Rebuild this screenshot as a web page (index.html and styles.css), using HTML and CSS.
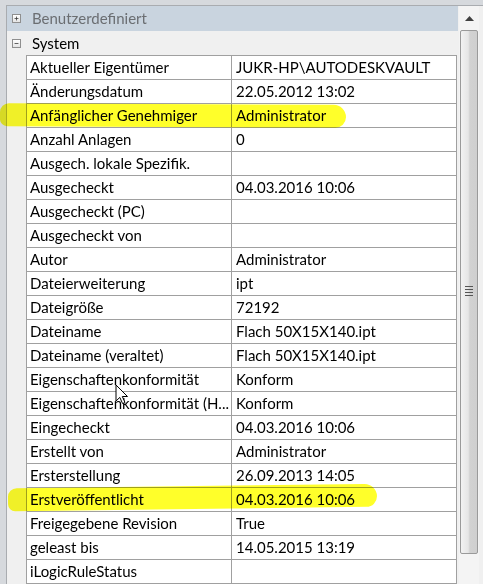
FILE: index.html
```html
<!DOCTYPE html>
<html>
<head>
<meta charset="utf-8">
<link rel="stylesheet" href="styles.css">
</head>
<body>
<div class="frame">
  <div class="panel">
    <div class="content">
      <div class="cat cat-collapsed">
        <span class="exp"><svg width="9" height="9" viewBox="0 0 9 9"><path d="M2 4.5h5M4.5 2v5" stroke="#3a3a3a" stroke-width="1"/></svg></span>
        <span class="cat-label muted">Benutzerdefiniert</span>
      </div>
      <div class="cat">
        <span class="exp"><svg width="9" height="9" viewBox="0 0 9 9"><path d="M2 4.5h5" stroke="#3a3a3a" stroke-width="1"/></svg></span>
        <span class="cat-label">System</span>
      </div>
      <div class="grid">
        <div class="row"><div class="name">Aktueller Eigentümer</div><div class="val">JUKR-HP\AUTODESKVAULT</div></div>
        <div class="row"><div class="name">Änderungsdatum</div><div class="val">22.05.2012 13:02</div></div>
        <div class="row"><div class="name">Anfänglicher Genehmiger</div><div class="val">Administrator</div></div>
        <div class="row"><div class="name">Anzahl Anlagen</div><div class="val">0</div></div>
        <div class="row"><div class="name">Ausgech. lokale Spezifik.</div><div class="val"></div></div>
        <div class="row"><div class="name">Ausgecheckt</div><div class="val">04.03.2016 10:06</div></div>
        <div class="row"><div class="name">Ausgecheckt (PC)</div><div class="val"></div></div>
        <div class="row"><div class="name">Ausgecheckt von</div><div class="val"></div></div>
        <div class="row"><div class="name">Autor</div><div class="val">Administrator</div></div>
        <div class="row"><div class="name">Dateierweiterung</div><div class="val">ipt</div></div>
        <div class="row"><div class="name">Dateigröße</div><div class="val">72192</div></div>
        <div class="row"><div class="name">Dateiname</div><div class="val">Flach 50X15X140.ipt</div></div>
        <div class="row"><div class="name">Dateiname (veraltet)</div><div class="val">Flach 50X15X140.ipt</div></div>
        <div class="row"><div class="name">Eigenschaftenkonformität</div><div class="val">Konform</div></div>
        <div class="row"><div class="name">Eigenschaftenkonformität (H...</div><div class="val">Konform</div></div>
        <div class="row"><div class="name">Eingecheckt</div><div class="val">04.03.2016 10:06</div></div>
        <div class="row"><div class="name">Erstellt von</div><div class="val">Administrator</div></div>
        <div class="row"><div class="name">Ersterstellung</div><div class="val">26.09.2013 14:05</div></div>
        <div class="row"><div class="name">Erstveröffentlicht</div><div class="val">04.03.2016 10:06</div></div>
        <div class="row"><div class="name">Freigegebene Revision</div><div class="val">True</div></div>
        <div class="row"><div class="name">geleast bis</div><div class="val">14.05.2015 13:19</div></div>
        <div class="row"><div class="name">iLogicRuleStatus</div><div class="val"></div></div>
        <div class="row"><div class="name">&nbsp;</div><div class="val"></div></div>
      </div>
    </div>
    <div class="scroll">
      <div class="arrow"><svg width="9" height="5" viewBox="0 0 9 5"><path d="M0 5L4.5 0L9 5Z" fill="#404040"/></svg></div>
      <div class="thumb">
        <div class="grip"><span></span><span></span><span></span><span></span></div>
      </div>
    </div>
  </div>
  <div class="hl hl1"></div>
  <div class="hl hl2"></div>
  <svg class="cursor" width="14" height="22" viewBox="0 0 14 22"><path d="M1 1V17L4.8 13.4L7.6 19.6L10 18.5L7.3 12.5H12.5Z" fill="#fff" stroke="#000" stroke-width="1" stroke-linejoin="miter"/></svg>
</div>
</body>
</html>
```
FILE: styles.css
```css
* { box-sizing: border-box; }
html, body { margin: 0; padding: 0; }
body {
  width: 483px;
  height: 584px;
  overflow: hidden;
  font-family: Lato, "Liberation Sans", sans-serif;
  font-size: 15px;
  color: #000;
  background: #d6d9dd;
}
.frame {
  position: relative;
  width: 483px;
  height: 584px;
  padding: 5px 0 0 6px;
  background: #d6d9dd;
}
.panel {
  display: flex;
  height: 579px;
  background: #f0f0f0;
  border-top: 1px solid #a9acb0;
  border-left: 1px solid #a9acb0;
}
.content {
  width: 451px;
  flex: none;
}
.cat {
  height: 24px;
  display: flex;
  align-items: center;
  padding-left: 5px;
}
.cat-collapsed {
  height: 25px;
  background: #c9d4df;
}
.exp {
  width: 9px;
  height: 9px;
  border: 1px solid #8f8f8f;
  background: linear-gradient(#ffffff, #e4e4e4);
  display: flex;
  align-items: center;
  justify-content: center;
  margin-right: 11px;
  flex: none;
}
.exp svg { display: block; }
.cat-label {
  font-size: 15px;
  line-height: 1;
}
.muted { color: #6b6e72; }
.grid {
  margin-left: 19px;
  width: 431px;
  border-top: 1px solid #a0a0a0;
  border-left: 1px solid #a0a0a0;
  background: #fff;
}
.row {
  display: grid;
  grid-template-columns: 205px 225px;
  height: 24px;
  border-bottom: 1px solid #a0a0a0;
}
.name, .val {
  padding-left: 3px;
  line-height: 23px;
  white-space: nowrap;
  overflow: hidden;
  border-right: 1px solid #a0a0a0;
}
.val { padding-left: 4px; }
.scroll {
  width: 20px;
  flex: none;
  margin-left: 1px;
  display: flex;
  flex-direction: column;
  align-items: center;
  background: #f4f4f4;
}
.arrow {
  height: 24px;
  display: flex;
  align-items: center;
  justify-content: center;
}
.arrow svg { display: block; }
.thumb {
  width: 18px;
  height: 524px;
  border: 1px solid #9a9a9a;
  border-radius: 2px;
  background: linear-gradient(90deg, #f2f2f2 0%, #e6e6e6 45%, #d2d2d2 55%, #cfcfcf 100%);
  display: flex;
  align-items: center;
  justify-content: center;
}
.grip {
  display: flex;
  flex-direction: column;
  gap: 2px;
  margin-top: -3px;
}
.grip span {
  display: block;
  width: 8px;
  height: 1px;
  background: #555;
}
.hl {
  position: absolute;
  background: #ffff1e;
  mix-blend-mode: multiply;
  border-radius: 10px 14px 12px 8px;
  opacity: 0.95;
}
.hl1 {
  left: 0;
  top: 104px;
  width: 346px;
  height: 23px;
  transform: rotate(0.3deg);
}
.hl2 {
  left: 8px;
  top: 486px;
  width: 369px;
  height: 23px;
  transform: rotate(-0.7deg);
}
.cursor {
  position: absolute;
  left: 115px;
  top: 384px;
}
```
